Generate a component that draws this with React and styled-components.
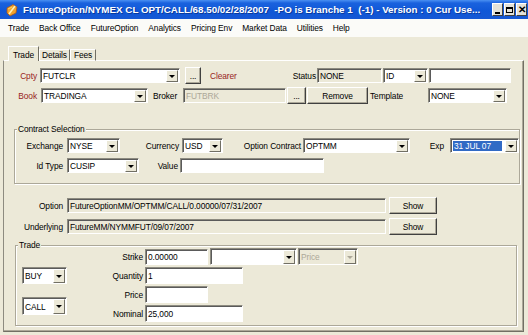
import React from 'react';
import styled, { createGlobalStyle } from 'styled-components';

const GlobalStyle = createGlobalStyle`
  html, body {
    margin: 0;
    padding: 0;
    background: #ece9d8;
  }
  body {
    font-family: 'Liberation Sans', Arial, sans-serif;
    font-size: 8.4px;
    letter-spacing: -0.1px;
    color: #000;
  }
`;

const Window = styled.div`
  width: 528px;
  height: 335px;
  display: flex;
  flex-direction: column;
  overflow: hidden;
  background: #ece9d8;
`;

const TitleBar = styled.div`
  height: 19px;
  display: flex;
  align-items: center;
  padding: 0 1px 0 5px;
  background: linear-gradient(to bottom, #4a90f2 0px, #1a62de 3px, #0f57d7 11px, #1658d4 19px);
`;

const TitleText = styled.div`
  flex: 1;
  margin-left: 4px;
  color: #fff;
  font-weight: bold;
  font-size: 9.8px;
  letter-spacing: 0;
  white-space: nowrap;
  overflow: hidden;
  text-shadow: 1px 1px 0 #0a3a9c;
`;

const Captions = styled.div`
  display: flex;
  gap: 1px;
`;

const CaptionButton = styled.div`
  width: 11px;
  height: 13px;
  box-sizing: border-box;
  background: #e4e2d8;
  border: 1px solid;
  border-color: #fff #404040 #404040 #fff;
  display: flex;
  align-items: center;
  justify-content: center;
  font-weight: bold;
  font-size: 10px;
  line-height: 1;
  color: #000;
`;

const MinGlyph = styled.span`
  width: 5px;
  height: 2px;
  background: #000;
  margin-top: 6px;
`;

const MaxGlyph = styled.span`
  width: 7px;
  height: 6px;
  box-sizing: border-box;
  border: 1px solid #000;
  border-top-width: 2px;
`;

const MenuBar = styled.div`
  height: 18px;
  display: flex;
  align-items: center;
  padding-left: 3px;
  background: #fbfbf8;
`;

const MenuItem = styled.span`
  padding: 0 5px;
  white-space: nowrap;
`;

const Body = styled.div`
  flex: 1;
  display: flex;
  flex-direction: column;
  padding: 9px 4px 3px 3px;
  min-height: 0;
`;

const TabStrip = styled.div`
  height: 15px;
  display: flex;
  align-items: flex-end;
  padding-left: 5px;
  margin-bottom: -1px;
  position: relative;
  z-index: 1;
`;

const Tab = styled.div`
  width: ${(p) => p.$w}px;
  height: ${(p) => (p.$active ? 15 : 12)}px;
  box-sizing: border-box;
  display: flex;
  align-items: center;
  justify-content: center;
  background: #ece9d8;
  border: 1px solid;
  border-color: #fff #716f64 ${(p) => (p.$active ? '#ece9d8' : '#fff')} #fff;
  border-bottom-width: ${(p) => (p.$active ? 0 : 1)}px;
  padding-top: ${(p) => (p.$active ? 1 : 0)}px;
`;

const Panel = styled.div`
  flex: 1;
  display: flex;
  flex-direction: column;
  border: 1px solid;
  border-color: #fff #716f64 #716f64 #8d8b80;
  box-shadow: inset -1px -1px 0 #aca899;
`;

const Row = styled.div`
  display: flex;
  align-items: center;
  height: ${(p) => p.$h || 17}px;
  margin-top: ${(p) => p.$mt || 0}px;
`;

const Label = styled.span`
  width: ${(p) => (p.$w ? `${p.$w}px` : 'auto')};
  margin-left: ${(p) => p.$ml || 0}px;
  padding-right: ${(p) => p.$pr || 0}px;
  box-sizing: border-box;
  text-align: ${(p) => (p.$left ? 'left' : 'right')};
  color: ${(p) => (p.$red ? '#981e1e' : '#000')};
  white-space: nowrap;
  flex-shrink: 0;
`;

const Field = styled.div`
  width: ${(p) => p.$w}px;
  height: ${(p) => p.$h || 15}px;
  margin-left: ${(p) => p.$ml || 0}px;
  box-sizing: border-box;
  flex-shrink: 0;
  display: flex;
  align-items: center;
  padding-left: 2px;
  white-space: nowrap;
  overflow: hidden;
  background: ${(p) => (p.$disabled ? '#ece9d8' : '#fff')};
  color: ${(p) => (p.$muted ? '#aca899' : '#000')};
  border: 1px solid;
  border-color: #8d8b80 #fff #fff #8d8b80;
  box-shadow: inset 1px 1px 0 #5a5a5a;
`;

const ComboBox = styled.div`
  width: ${(p) => p.$w}px;
  height: ${(p) => p.$h || 15}px;
  margin-left: ${(p) => p.$ml || 0}px;
  box-sizing: border-box;
  flex-shrink: 0;
  display: flex;
  align-items: stretch;
  background: ${(p) => (p.$disabled ? '#ece9d8' : '#fff')};
  color: ${(p) => (p.$disabled ? '#aca899' : '#000')};
  border: 1px solid;
  border-color: #8d8b80 #fff #fff #8d8b80;
  box-shadow: inset 1px 1px 0 #5a5a5a;
`;

const ComboValue = styled.div`
  flex: 1;
  display: flex;
  align-items: center;
  padding: 1px 0 0 2px;
  white-space: nowrap;
  overflow: hidden;
`;

const Selected = styled.span`
  background: #316ac5;
  color: #fff;
  align-self: stretch;
  display: flex;
  align-items: center;
  flex: 1;
  margin: 1px 3px 1px 0;
  padding-left: 1px;
`;

const ComboArrow = styled.div`
  width: 12px;
  margin: 1px 1px 0 0;
  box-sizing: border-box;
  background: #ece9d8;
  border: 1px solid;
  border-color: #fff #716f64 #716f64 #fff;
  display: flex;
  align-items: center;
  justify-content: center;

  &::after {
    content: '';
    border-top: 3px solid ${(p) => (p.$disabled ? '#aca899' : '#000')};
    border-left: 3px solid transparent;
    border-right: 3px solid transparent;
  }
`;

const Button = styled.div`
  width: ${(p) => p.$w}px;
  height: ${(p) => p.$h || 17}px;
  margin-left: ${(p) => p.$ml || 0}px;
  box-sizing: border-box;
  flex-shrink: 0;
  display: flex;
  align-items: center;
  justify-content: center;
  background: #ece9d8;
  border: 1px solid;
  border-color: #fff #404040 #404040 #fff;
  box-shadow: inset -1px -1px 0 #aca899;
  white-space: nowrap;
`;

const GroupBox = styled.div`
  position: relative;
  margin: ${(p) => p.$mt}px ${(p) => p.$mr}px 0 ${(p) => p.$ml}px;
  padding: ${(p) => p.$pt}px 0 ${(p) => p.$pb}px 0;
  border: 1px solid #aca899;
  box-shadow: inset 1px 1px 0 #fff, 1px 1px 0 #fff;
`;

const GroupTitle = styled.span`
  position: absolute;
  top: -5px;
  left: 2px;
  padding: 0 1px;
  line-height: 9px;
  background: #ece9d8;
`;

const TradeBody = styled.div`
  display: flex;
`;

const SideColumn = styled.div`
  display: flex;
  flex-direction: column;
  gap: 13px;
  padding: 19px 0 0 6px;
`;

const FieldColumn = styled.div`
  display: flex;
  flex-direction: column;
  gap: 2px;
`;

const Combo = ({ value, selected, disabled, ...rest }) => (
  <ComboBox $disabled={disabled} {...rest}>
    <ComboValue>{selected ? <Selected>{value}</Selected> : value}</ComboValue>
    <ComboArrow $disabled={disabled} />
  </ComboBox>
);

const AppIcon = () => (
  <svg width="14" height="14" viewBox="0 0 14 14">
    <path d="M2 5 L8 1.5 L12 4 L11 10 L5 13 L2 10 Z" fill="#f2a22c" stroke="#a8561a" strokeWidth="0.8" />
    <path d="M4 11 L10 3" stroke="#fff2b8" strokeWidth="1.6" />
    <path d="M3 6 L7 4" stroke="#ffd56a" strokeWidth="1" />
  </svg>
);

const menus = ['Trade', 'Back Office', 'FutureOption', 'Analytics', 'Pricing Env', 'Market Data', 'Utilities', 'Help'];

export default function App() {
  return (
    <>
      <GlobalStyle />
      <Window>
        <TitleBar>
          <AppIcon />
          <TitleText>
            FutureOption/NYMEX CL OPT/CALL/68.50/02/28/2007&nbsp; -PO is Branche 1&nbsp; (-1) - Version : 0 Cur Use...
          </TitleText>
          <Captions>
            <CaptionButton><MinGlyph /></CaptionButton>
            <CaptionButton><MaxGlyph /></CaptionButton>
            <CaptionButton>✕</CaptionButton>
          </Captions>
        </TitleBar>

        <MenuBar>
          {menus.map((m) => (
            <MenuItem key={m}>{m}</MenuItem>
          ))}
        </MenuBar>

        <Body>
          <TabStrip>
            <Tab $w={31} $active>Trade</Tab>
            <Tab $w={31}>Details</Tab>
            <Tab $w={26}>Fees</Tab>
          </TabStrip>

          <Panel>
            <Row $mt={6}>
              <Label $w={36} $pr={3} $red>Cpty</Label>
              <Combo $w={140} value="FUTCLR" />
              <Button $w={16} $ml={5}>...</Button>
              <Label $w={81} $ml={9} $left $red>Clearer</Label>
              <Label $w={26} $pr={1}>Status</Label>
              <Field $w={65} $disabled>NONE</Field>
              <Combo $w={45} $ml={1} value="ID" />
              <Field $w={82} $ml={1} />
            </Row>
            <Row $mt={3}>
              <Label $w={36} $pr={3} $red>Book</Label>
              <Combo $w={107} $ml={1} value="TRADINGA" />
              <Label $w={30} $ml={5} $left>Broker</Label>
              <Field $w={103} $disabled $muted>FUTBRK</Field>
              <Button $w={19} $ml={1}>...</Button>
              <Button $w={61} $ml={1}>Remove</Button>
              <Label $w={58} $ml={2} $left>Template</Label>
              <Combo $w={79} value="NONE" />
            </Row>

            <GroupBox $mt={25} $mr={3} $ml={10} $pt={8} $pb={10}>
              <GroupTitle>Contract Selection</GroupTitle>
              <Row $h={15}>
                <Label $w={52} $pr={4}>Exchange</Label>
                <Combo $w={53} value="NYSE" />
                <Label $w={62} $pr={3}>Currency</Label>
                <Combo $w={41} value="USD" />
                <Label $w={80} $pr={2}>Option Contract</Label>
                <Combo $w={107} value="OPTMM" />
                <Label $w={40} $pr={6}>Exp</Label>
                <Combo $w={69} value="31 JUL 07" selected />
              </Row>
              <Row $h={15} $mt={5}>
                <Label $w={52} $pr={4}>Id Type</Label>
                <Combo $w={72} value="CUSIP" />
                <Label $w={41} $pr={2}>Value</Label>
                <Field $w={144} />
              </Row>
            </GroupBox>

            <Row $mt={13}>
              <Label $w={63} $pr={4}>Option</Label>
              <Field $w={319} $disabled>FutureOptionMM/OPTMM/CALL/0.00000/07/31/2007</Field>
              <Button $w={48} $ml={3}>Show</Button>
            </Row>
            <Row $mt={4}>
              <Label $w={63} $pr={4}>Underlying</Label>
              <Field $w={319} $disabled>FutureMM/NYMMFUT/09/07/2007</Field>
              <Button $w={48} $ml={3}>Show</Button>
            </Row>

            <GroupBox $mt={10} $mr={6} $ml={11} $pt={2} $pb={3}>
              <GroupTitle>Trade</GroupTitle>
              <TradeBody>
                <SideColumn>
                  <Combo $w={45} $h={17} value="BUY" />
                  <Combo $w={45} $h={18} value="CALL" />
                </SideColumn>
                <FieldColumn>
                  <Row>
                    <Label $w={78} $pr={2}>Strike</Label>
                    <Field $w={63} $h={16}>0.00000</Field>
                    <Combo $w={87} $h={17} $ml={2} value="" />
                    <Combo $w={60} $h={17} $ml={1} value="Price" disabled />
                  </Row>
                  <Row>
                    <Label $w={78} $pr={2}>Quantity</Label>
                    <Field $w={98} $h={17}>1</Field>
                  </Row>
                  <Row>
                    <Label $w={78} $pr={2}>Price</Label>
                    <Field $w={63} $h={17} />
                  </Row>
                  <Row>
                    <Label $w={78} $pr={2}>Nominal</Label>
                    <Field $w={98} $h={17}>25,000</Field>
                  </Row>
                </FieldColumn>
              </TradeBody>
            </GroupBox>
          </Panel>
        </Body>
      </Window>
    </>
  );
}
